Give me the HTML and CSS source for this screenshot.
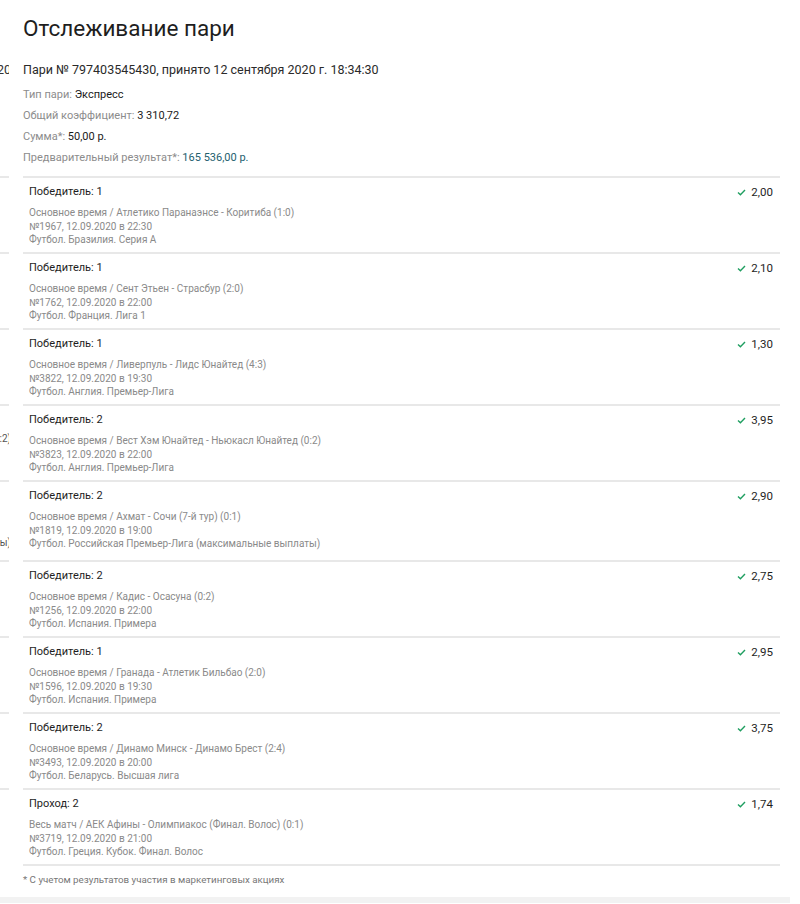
FILE: index.html
```html
<!DOCTYPE html>
<html lang="ru">
<head>
    <meta charset="UTF-8">
    <meta name="viewport" content="width=device-width, initial-scale=1.0">
    <title>Отслеживание пари</title>
    <link rel="stylesheet" href="styles.css">
</head>
<body>
    <div class="page">
        <div class="head">
            <div class="ghost"></div>
            <div class="main">
                <h1>Отслеживание пари</h1>
            </div>
        </div>

        <div class="head">
            <div class="ghost"><div class="ghost-line top-line"><span>12.09.2020</span></div></div>
            <div class="main summary">
                <div class="bet-title">Пари № 797403545430, принято 12 сентября 2020 г. 18:34:30</div>
                <div class="info"><span class="label">Тип пари:</span> <b>Экспресс</b></div>
                <div class="info"><span class="label">Общий коэффициент:</span> <b>3 310,72</b></div>
                <div class="info"><span class="label">Сумма*:</span> <b>50,00 р.</b></div>
                <div class="info"><span class="label">Предварительный результат*:</span> <b class="win">165 536,00 р.</b></div>
            </div>
        </div>

        <div class="list" id="list"></div>

        <div class="head">
            <div class="ghost"></div>
            <div class="main note">* С учетом результатов участия в маркетинговых акциях</div>
        </div>

        <div class="bottom"></div>
    </div>

    <script>
        // События экспресса
        const events = [
            { pick: 'Победитель: 1', match: 'Основное время / Атлетико Паранаэнсе - Коритиба (1:0)', num: '№1967, 12.09.2020 в 22:30', league: 'Футбол. Бразилия. Серия А', odds: '2,00' },
            { pick: 'Победитель: 1', match: 'Основное время / Сент Этьен - Страсбур (2:0)', num: '№1762, 12.09.2020 в 22:00', league: 'Футбол. Франция. Лига 1', odds: '2,10' },
            { pick: 'Победитель: 1', match: 'Основное время / Ливерпуль - Лидс Юнайтед (4:3)', num: '№3822, 12.09.2020 в 19:30', league: 'Футбол. Англия. Премьер-Лига', odds: '1,30' },
            { pick: 'Победитель: 2', match: 'Основное время / Вест Хэм Юнайтед - Ньюкасл Юнайтед (0:2)', num: '№3823, 12.09.2020 в 22:00', league: 'Футбол. Англия. Премьер-Лига', odds: '3,95', side: ['(0:2)', '', ''] },
            { pick: 'Победитель: 2', match: 'Основное время / Ахмат - Сочи (7-й тур) (0:1)', num: '№1819, 12.09.2020 в 19:00', league: 'Футбол. Российская Премьер-Лига (максимальные выплаты)', odds: '2,90', side: ['', '', 'выплаты)'], tall: true },
            { pick: 'Победитель: 2', match: 'Основное время / Кадис - Осасуна (0:2)', num: '№1256, 12.09.2020 в 22:00', league: 'Футбол. Испания. Примера', odds: '2,75' },
            { pick: 'Победитель: 1', match: 'Основное время / Гранада - Атлетик Бильбао (2:0)', num: '№1596, 12.09.2020 в 19:30', league: 'Футбол. Испания. Примера', odds: '2,95' },
            { pick: 'Победитель: 2', match: 'Основное время / Динамо Минск - Динамо Брест (2:4)', num: '№3493, 12.09.2020 в 20:00', league: 'Футбол. Беларусь. Высшая лига', odds: '3,75' },
            { pick: 'Проход: 2', match: 'Весь матч / АЕК Афины - Олимпиакос (Финал. Волос) (0:1)', num: '№3719, 12.09.2020 в 21:00', league: 'Футбол. Греция. Кубок. Финал. Волос', odds: '1,74' }
        ];

        const check = '<svg class="check" width="9" height="7" viewBox="0 0 9 7"><path d="M1 3.6 L3.4 5.8 L8 1" fill="none" stroke="currentColor" stroke-width="1.4"/></svg>';

        const list = document.getElementById('list');
        events.forEach(e => {
            const side = e.side || ['', '', ''];
            const row = document.createElement('div');
            row.className = 'row' + (e.tall ? ' tall' : '');
            row.innerHTML = `
                <div class="ghost bordered">
                    <div class="ghost-pad"></div>
                    ${side.map(t => `<div class="ghost-line"><span>${t}</span></div>`).join('')}
                </div>
                <div class="main event">
                    <div class="event-body">
                        <div class="pick">${e.pick}</div>
                        <div class="detail">${e.match}</div>
                        <div class="detail">${e.num}</div>
                        <div class="detail">${e.league}</div>
                    </div>
                    <div class="odds">${check}<span>${e.odds}</span></div>
                </div>`;
            list.appendChild(row);
        });
    </script>
</body>
</html>
```

FILE: styles.css
```css
* {
    margin: 0;
    padding: 0;
    box-sizing: border-box;
}

body {
    font-family: Roboto, "Liberation Sans", sans-serif;
    background: #fff;
    color: #222;
}

.page {
    width: 800px;
}

.head,
.row {
    display: grid;
    grid-template-columns: 9px 757px;
    column-gap: 14px;
}

.ghost {
    overflow: hidden;
    color: #555;
    font-size: 10px;
}

.ghost.bordered {
    border-top: 2px solid #e8e8e8;
}

.ghost-pad {
    height: 26px;
}

.ghost-line {
    display: flex;
    justify-content: flex-end;
    height: 14px;
    line-height: 14px;
    white-space: nowrap;
}

.ghost-line span {
    margin-right: -2px;
}

.ghost-line.top-line {
    margin-top: 16px;
    height: 20px;
    line-height: 20px;
    font-size: 12.5px;
    color: #333;
}

h1 {
    font-size: 22.5px;
    font-weight: 400;
    line-height: 32px;
    padding-top: 12px;
    color: #1e1e1e;
}

.summary {
    padding-top: 16px;
    padding-bottom: 8px;
}

.bet-title {
    font-size: 12.5px;
    line-height: 20px;
    color: #2a2a2a;
    margin-bottom: 4px;
}

.info {
    font-size: 11px;
    line-height: 21px;
}

.info .label {
    color: #8c8c8c;
}

.info b {
    font-weight: 400;
    color: #1a1a1a;
}

.info b.win {
    color: #24606e;
}

.event {
    display: flex;
    justify-content: space-between;
    border-top: 2px solid #e8e8e8;
    padding: 6px 7px 5px 6px;
    min-height: 76px;
}

.row.tall .event {
    min-height: 80px;
}

.pick {
    font-size: 11px;
    line-height: 16px;
    color: #1e1e1e;
    margin-bottom: 6px;
}

.detail {
    font-size: 10px;
    line-height: 13.5px;
    color: #8a8a8a;
}

.odds {
    display: flex;
    align-items: center;
    gap: 5px;
    height: 16px;
    font-size: 11.5px;
    color: #1e1e1e;
}

.check {
    color: #1f9e60;
}

.note {
    border-top: 2px solid #e8e8e8;
    padding-top: 8px;
    height: 33px;
    font-size: 9.75px;
    color: #777;
}

.bottom {
    width: 790px;
    height: 6px;
    background: #f2f2f2;
}
```
